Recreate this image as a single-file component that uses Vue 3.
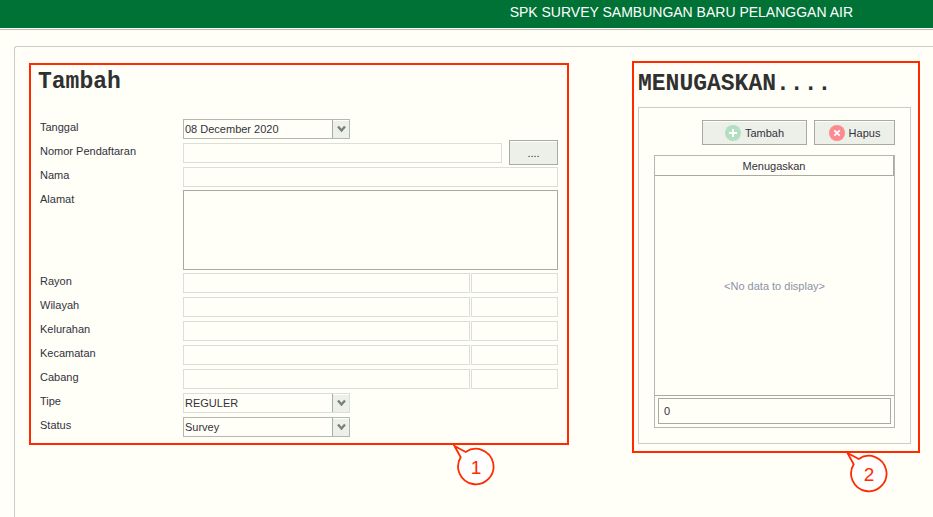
<script setup>
import { ref } from 'vue'

const tanggal = ref('08 December 2020')
const tipe = ref('REGULER')
const status = ref('Survey')
const jumlah = ref('0')

const wilayahRows = [
  { id: 'rayon', label: 'Rayon' },
  { id: 'wilayah', label: 'Wilayah' },
  { id: 'kelurahan', label: 'Kelurahan' },
  { id: 'kecamatan', label: 'Kecamatan' },
  { id: 'cabang', label: 'Cabang' },
]
</script>

<template>
  <div class="page">
    <header class="topbar">SPK SURVEY SAMBUNGAN BARU PELANGGAN AIR</header>

    <main class="panel">
      <section class="marked form-box">
        <h1 class="title">Tambah</h1>
        <form class="form" @submit.prevent>
          <div class="row">
            <label for="tanggal">Tanggal</label>
            <div class="combo">
              <select id="tanggal" v-model="tanggal">
                <option>08 December 2020</option>
              </select>
              <span class="arrow">
                <svg width="9" height="8" viewBox="0 0 9 8"><path d="M1 1.5 L4.5 5.5 L8 1.5" /></svg>
              </span>
            </div>
          </div>
          <div class="row">
            <label for="nomor">Nomor Pendaftaran</label>
            <div class="lookup">
              <input id="nomor" type="text" />
              <button type="button" class="btn browse">....</button>
            </div>
          </div>
          <div class="row">
            <label for="nama">Nama</label>
            <input id="nama" type="text" />
          </div>
          <div class="row tall">
            <label for="alamat">Alamat</label>
            <textarea id="alamat"></textarea>
          </div>
          <div v-for="r in wilayahRows" :key="r.id" class="row">
            <label :for="r.id">{{ r.label }}</label>
            <div class="pair">
              <input :id="r.id" type="text" />
              <input type="text" :aria-label="r.label + ' kode'" />
            </div>
          </div>
          <div class="row">
            <label for="tipe">Tipe</label>
            <div class="combo">
              <select id="tipe" v-model="tipe" class="light">
                <option>REGULER</option>
              </select>
              <span class="arrow">
                <svg width="9" height="8" viewBox="0 0 9 8"><path d="M1 1.5 L4.5 5.5 L8 1.5" /></svg>
              </span>
            </div>
          </div>
          <div class="row">
            <label for="status">Status</label>
            <div class="combo">
              <select id="status" v-model="status">
                <option>Survey</option>
              </select>
              <span class="arrow">
                <svg width="9" height="8" viewBox="0 0 9 8"><path d="M1 1.5 L4.5 5.5 L8 1.5" /></svg>
              </span>
            </div>
          </div>
        </form>
        <div class="callout one">
          <svg width="42" height="42" viewBox="0 0 42 42">
            <path d="M1.5 1 L12.7 7 A17.7 17.7 0 1 1 7.7 12.3 Z" />
          </svg>
          <span>1</span>
        </div>
      </section>

      <section class="marked assign-box">
        <h2 class="title">MENUGASKAN....</h2>
        <div class="group">
          <div class="actions">
            <button type="button" class="btn add">
              <svg width="16" height="16" viewBox="0 0 16 16">
                <circle cx="8" cy="8" r="8" fill="#b2dfc1" />
                <path d="M8 4v8M4 8h8" stroke="#fff" stroke-width="2" />
              </svg>
              Tambah
            </button>
            <button type="button" class="btn remove">
              <svg width="16" height="16" viewBox="0 0 16 16">
                <circle cx="8" cy="8" r="8" fill="#fb8b90" />
                <path d="M5.3 5.3l5.4 5.4M10.7 5.3l-5.4 5.4" stroke="#fff" stroke-width="1.7" />
              </svg>
              Hapus
            </button>
          </div>
          <table class="grid">
            <thead>
              <tr><th scope="col">Menugaskan</th></tr>
            </thead>
            <tbody>
              <tr><td class="empty">&lt;No data to display&gt;</td></tr>
            </tbody>
            <tfoot>
              <tr>
                <td class="total"><input v-model="jumlah" type="text" aria-label="Jumlah" readonly /></td>
              </tr>
            </tfoot>
          </table>
        </div>
        <div class="callout two">
          <svg width="42" height="42" viewBox="0 0 42 42">
            <path d="M1.5 1 L12.7 7 A17.7 17.7 0 1 1 7.7 12.3 Z" />
          </svg>
          <span>2</span>
        </div>
      </section>
    </main>
  </div>
</template>

<style>
body {
  background: #fffff8;
}
</style>

<style scoped>
.page,
.page * {
  box-sizing: border-box;
}
.page {
  display: flex;
  flex-direction: column;
  min-height: 100vh;
  color: #32323c;
  font-family: "Liberation Sans", Arial, sans-serif;
  font-size: 11px;
}
.topbar {
  height: 28px;
  padding-right: 80px;
  background: #007236;
  box-shadow: 0 1px 0 #fffff8, 0 2px 0 #b9bdb6;
  color: #fff;
  font-size: 14px;
  line-height: 24px;
  text-align: right;
  white-space: nowrap;
}
.panel {
  flex: 1;
  display: grid;
  grid-template-columns: 540fr 288fr;
  column-gap: 63px;
  align-items: start;
  margin: 18px 0 0 14px;
  padding: 14px 13px 0 14px;
  border: 1px solid #c9cdc6;
  border-width: 1px 0 0 1px;
  border-top-left-radius: 3px;
}
.marked {
  position: relative;
  border: 2px solid #ff2a00;
}
.form-box {
  margin-top: 2px;
  padding: 0 7px 6px;
}
.assign-box {
  padding: 0 7px 7px 4px;
}
.title {
  margin: 0;
  color: #303030;
  font-family: "Courier New", "Liberation Mono", monospace;
  font-size: 23px;
  font-weight: bold;
  line-height: 34px;
}
.assign-box .title {
  line-height: 42px;
  margin-bottom: 2px;
}
.form {
  display: flex;
  flex-direction: column;
  gap: 4px;
  margin-top: 20px;
  padding: 0 2px;
}
.row {
  display: grid;
  grid-template-columns: 143px 1fr;
  height: 20px;
}
.row.tall {
  height: 80px;
  margin: -1px 0;
}
.row > label {
  line-height: 16px;
}
.row.tall > label {
  line-height: 18px;
}
input,
select,
textarea {
  display: block;
  width: 100%;
  min-width: 0;
  height: 20px;
  margin: 0;
  padding: 0 1px;
  border: 1px solid #dadfd7;
  border-radius: 0;
  outline: 0;
  background: #fffff8;
  color: inherit;
  font: inherit;
}
textarea {
  height: 80px;
  border-color: #a7aca3;
  resize: none;
}
.combo {
  position: relative;
  width: 167px;
}
select {
  appearance: none;
  border-color: #b3b8b0;
}
select.light {
  border-color: #dadfd7;
}
.arrow {
  position: absolute;
  top: 1px;
  right: 1px;
  bottom: 1px;
  display: flex;
  align-items: center;
  justify-content: center;
  width: 17px;
  border-left: 1px solid #a7aca3;
  background: #ecf0e8;
  box-shadow: inset 0 1px 0 #fffff8;
  pointer-events: none;
}
.arrow path {
  fill: none;
  stroke: #7b8077;
  stroke-width: 2.4;
}
.lookup {
  display: flex;
  align-items: flex-start;
  gap: 7px;
}
.pair {
  display: grid;
  grid-template-columns: 287fr 87fr;
  gap: 1px;
}
.btn {
  display: flex;
  align-items: center;
  justify-content: center;
  gap: 4px;
  height: 25px;
  margin: 0;
  padding: 0;
  border: 1px solid #a7aca3;
  border-radius: 0;
  background: #ecf0e8;
  box-shadow: inset 0 1px 0 #fffff8;
  color: inherit;
  font: inherit;
}
.browse {
  flex: 0 0 49px;
  margin: -3px 0 -2px;
}
.add {
  width: 105px;
}
.remove {
  width: 81px;
}
.group {
  padding: 12px 15px 15px;
  border: 1px solid #c9cdc6;
}
.actions {
  display: flex;
  justify-content: flex-end;
  gap: 7px;
  margin-bottom: 10px;
}
.grid {
  width: 100%;
  border: 1px solid #b3b8b0;
  border-spacing: 0;
}
.grid th {
  height: 20px;
  padding: 0;
  border: 1px solid #a7aca3;
  border-width: 0 1px 1px 0;
  font-weight: normal;
}
.empty {
  height: 219px;
  padding: 0;
  color: #8c91a6;
  text-align: center;
}
.total {
  padding: 2px 3px 3px;
  border-top: 1px solid #a7aca3;
}
.total input {
  height: 26px;
  padding: 0 5px;
  border-color: #a7aca3;
}
.callout {
  position: absolute;
  width: 42px;
  height: 42px;
  color: #ff2a00;
  font-size: 19px;
}
.callout svg {
  display: block;
}
.callout path {
  fill: #fff;
  stroke: #ff2a00;
  stroke-width: 1.8;
}
.callout span {
  position: absolute;
  inset: 4px 0 0 4px;
  display: flex;
  align-items: center;
  justify-content: center;
}
.callout.one {
  right: 72px;
  bottom: -44px;
}
.callout.two {
  right: 30px;
  bottom: -43px;
}
</style>
